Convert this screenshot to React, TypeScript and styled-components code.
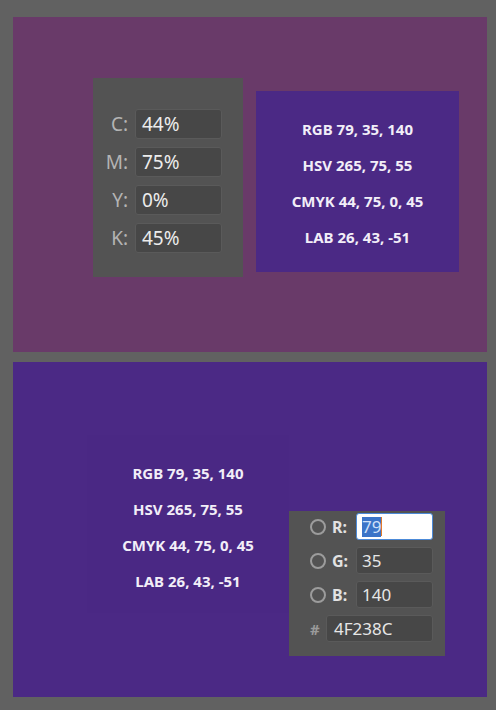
import React from 'react';
import styled, { createGlobalStyle } from 'styled-components';

const GlobalStyle = createGlobalStyle`
	html, body {
		margin: 0;
		padding: 0;
		background: #616161;
		font-family: 'Noto Sans', 'Open Sans', sans-serif;
	}
`;

const formats = ['RGB 79, 35, 140', 'HSV 265, 75, 55', 'CMYK 44, 75, 0, 45', 'LAB 26, 43, -51'];

const cmyk = [
	{ label: 'C:', value: '44%' },
	{ label: 'M:', value: '75%' },
	{ label: 'Y:', value: '0%' },
	{ label: 'K:', value: '45%' },
];

const rgb = [
	{ label: 'R:', value: '79', active: true },
	{ label: 'G:', value: '35', active: false },
	{ label: 'B:', value: '140', active: false },
];

const App: React.FC = () => {
	return (
		<>
			<GlobalStyle />
			<Page>
				<Stage $bg='#693a69' $pad='61px 0 0 80px'>
					<CmykBox>
						{cmyk.map((c) => (
							<React.Fragment key={c.label}>
								<FieldLabel>{c.label}</FieldLabel>
								<Field>{c.value}</Field>
							</React.Fragment>
						))}
					</CmykBox>
					<InfoBox>
						{formats.map((f) => (
							<InfoLine key={f}>{f}</InfoLine>
						))}
					</InfoBox>
				</Stage>
				<Stage $bg='#4b2985' $pad='73px 0 0 74px'>
					<GhostBox>
						{formats.map((f) => (
							<InfoLine key={f}>{f}</InfoLine>
						))}
					</GhostBox>
					<RgbBox>
						{rgb.map((r) => (
							<RgbRow key={r.label}>
								<Radio />
								<RgbLabel>{r.label}</RgbLabel>
								<RgbField $active={r.active}>
									{r.active ? (
										<>
											<Selected>{r.value}</Selected>
											<Caret />
										</>
									) : (
										r.value
									)}
								</RgbField>
							</RgbRow>
						))}
						<RgbRow>
							<Hash>#</Hash>
							<HexField>4F238C</HexField>
						</RgbRow>
					</RgbBox>
				</Stage>
			</Page>
		</>
	);
};

export default App;

const Page = styled.div`
	width: 496px;
	height: 710px;
	box-sizing: border-box;
	padding: 17px 9px 13px 13px;
	display: flex;
	flex-direction: column;
	gap: 10px;
`;

const Stage = styled.section<{ $bg: string; $pad: string }>`
	height: 335px;
	width: 474px;
	flex-shrink: 0;
	box-sizing: border-box;
	background: ${({ $bg }) => $bg};
	padding: ${({ $pad }) => $pad};
	display: flex;
	align-items: flex-start;
`;

const CmykBox = styled.div`
	width: 150px;
	height: 199px;
	box-sizing: border-box;
	background: #535353;
	padding: 31px 21px 0 0;
	display: grid;
	grid-template-columns: 35px 87px;
	grid-auto-rows: 30px;
	column-gap: 7px;
	row-gap: 8px;
	align-content: start;
`;

const FieldLabel = styled.span`
	text-align: right;
	align-self: center;
	font-size: 19px;
	color: #b4b4b4;
`;

const Field = styled.div`
	box-sizing: border-box;
	background: #474747;
	border: 1px solid #5a5a5a;
	border-radius: 3px;
	padding: 0 6px;
	display: flex;
	align-items: center;
	font-size: 19px;
	color: #ececec;
`;

const InfoBox = styled.div`
	width: 203px;
	height: 181px;
	box-sizing: border-box;
	margin: 13px 0 0 13px;
	padding-top: 20px;
	background: #4b2985;
	display: flex;
	flex-direction: column;
`;

const GhostBox = styled(InfoBox)`
	width: 202px;
	height: 178px;
	margin: 0;
	background: #4a2884;
`;

const InfoLine = styled.div`
	height: 36px;
	line-height: 36px;
	text-align: center;
	font-size: 15px;
	font-weight: 700;
	color: #f2eef8;
`;

const RgbBox = styled.div`
	width: 156px;
	height: 145px;
	box-sizing: border-box;
	margin-top: 76px;
	background: #535353;
	padding: 2px 12px 0 21px;
	display: flex;
	flex-direction: column;
	gap: 7px;
`;

const RgbRow = styled.div`
	height: 27px;
	display: flex;
	align-items: center;
`;

const Radio = styled.span`
	width: 16px;
	height: 16px;
	box-sizing: border-box;
	border-radius: 50%;
	border: 2px solid #9c9c9c;
	margin-right: 6px;
	flex-shrink: 0;
`;

const RgbLabel = styled.span`
	font-size: 16px;
	font-weight: 700;
	color: #e2e2e2;
`;

const RgbField = styled.div<{ $active: boolean }>`
	margin-left: auto;
	width: 77px;
	height: 27px;
	box-sizing: border-box;
	border-radius: 3px;
	border: 1px solid ${({ $active }) => ($active ? '#4c8ad8' : '#5a5a5a')};
	background: ${({ $active }) => ($active ? '#ffffff' : '#474747')};
	padding: 0 5px;
	display: flex;
	align-items: center;
	font-size: 17px;
	color: #e6e6e6;
`;

const Selected = styled.span`
	background: #3b74c8;
	color: #cfe0f8;
	line-height: 20px;
`;

const Caret = styled.span`
	width: 1px;
	height: 19px;
	background: #e07a2a;
`;

const Hash = styled.span`
	width: 16px;
	font-size: 15px;
	font-weight: 700;
	color: #9a9a9a;
`;

const HexField = styled(RgbField).attrs({ $active: false })`
	width: 107px;
	padding-left: 7px;
`;
